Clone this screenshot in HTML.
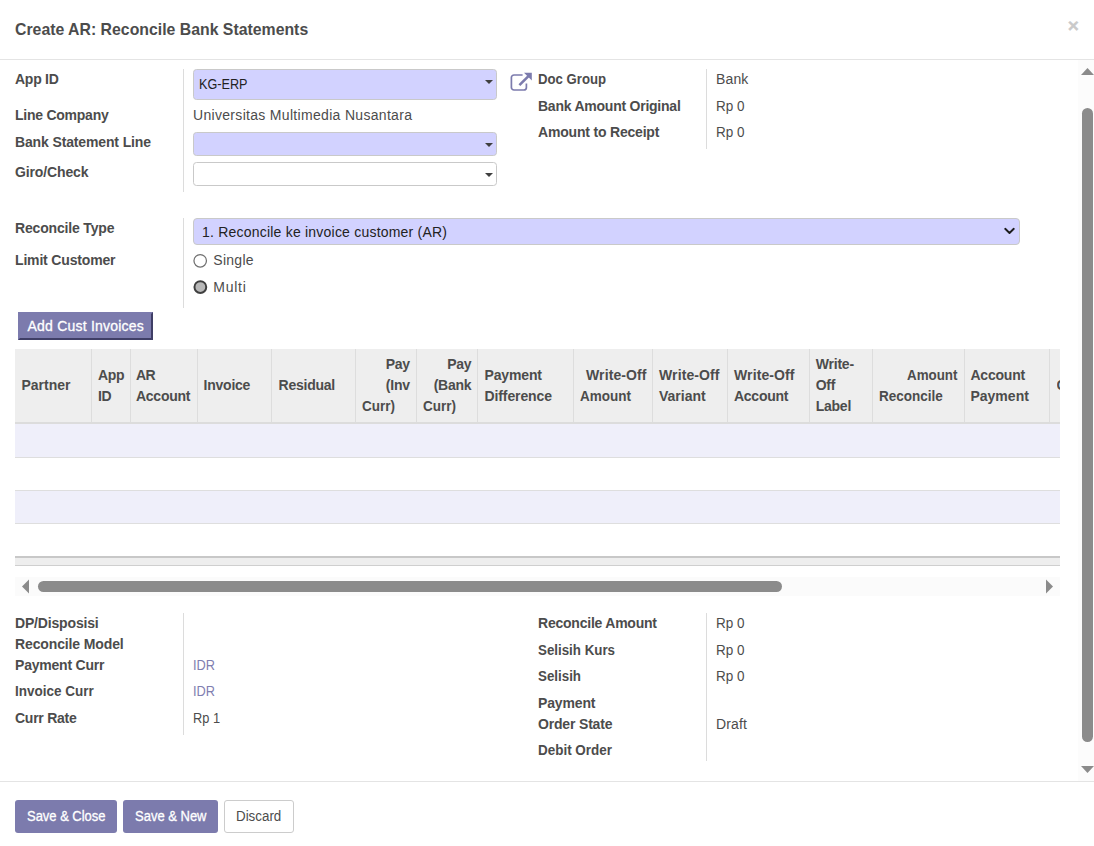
<!DOCTYPE html>
<html lang="en">
<head>
<meta charset="utf-8">
<title>Create AR: Reconcile Bank Statements</title>
<style>
html,body{margin:0;padding:0;background:#fff;}
body{width:1094px;height:846px;overflow:hidden;position:relative;font-family:"Liberation Sans",sans-serif;}
.t{position:absolute;white-space:nowrap;}
.a{position:absolute;}
.hline{position:absolute;left:0;width:1094px;height:1px;background:#e4e4e4;}
.vsep{position:absolute;width:1px;background:#dcdcdc;}
.inp{position:absolute;box-sizing:border-box;border:1px solid #c9c9c9;border-radius:3.5px;background:#d2d2ff;}
.caret{position:absolute;width:0;height:0;border-left:4px solid transparent;border-right:4px solid transparent;border-top:4px solid #3f3f3f;}
.th{position:absolute;top:349px;height:73px;background:#eeeeee;}
.colsep{position:absolute;top:349px;height:73px;width:1px;background:#dddddd;}
.row{position:absolute;left:15px;width:1045px;}
.btn{position:absolute;box-sizing:border-box;border-radius:3px;background:#7c7bad;}
</style>
</head>
<body>
<!-- header -->
<div class="hline" style="top:59px"></div>
<span class="t" style="left:1067.8px;top:14.3px;font-size:19px;line-height:23px;font-weight:700;color:#cacaca;-webkit-text-stroke:0.4px #cacaca;">×</span>

<!-- vertical scrollbar -->
<div class="a" style="left:1078px;top:60px;width:16px;height:721px;background:#fcfcfc;"></div>
<div class="a" style="left:1082px;top:108px;width:11px;height:634px;border-radius:5.5px;background:#8b8b8b;"></div>
<svg class="a" style="left:1078px;top:60px" width="16" height="721" viewBox="1078 60 16 721">
<polygon points="1081,75 1087.5,68 1094,75" fill="#8b8b8b"/>
<polygon points="1081,766 1087.5,773 1094,766" fill="#8b8b8b"/>
</svg>

<!-- group 1 -->
<div class="vsep" style="left:183px;top:69px;height:123px"></div>
<div class="vsep" style="left:706px;top:69px;height:80px"></div>
<div class="inp" style="left:193px;top:69px;width:304px;height:31px"></div>
<div class="caret" style="left:485px;top:80px"></div>
<div class="inp" style="left:193px;top:132px;width:304px;height:24px"></div>
<div class="caret" style="left:485px;top:143px"></div>
<div class="inp" style="left:193px;top:162px;width:304px;height:24px;background:#fff"></div>
<div class="caret" style="left:485px;top:173px"></div>
<svg class="a" style="left:506px;top:68px" width="30" height="28" viewBox="506 68 30 28">
<path d="M522.6 75H514a2.6 2.6 0 0 0-2.6 2.6V87.4a2.6 2.6 0 0 0 2.6 2.6h9.8a2.6 2.6 0 0 0 2.6-2.6V83.6" fill="none" stroke="#7c7bad" stroke-width="1.7"/>
<path d="M519.4 85.2L529 75.6" fill="none" stroke="#7c7bad" stroke-width="2.6"/>
<polygon points="524,72.8 531.8,72.8 531.8,80.6" fill="#7c7bad"/>
</svg>

<!-- group 2 -->
<div class="vsep" style="left:183px;top:218px;height:90px"></div>
<div class="inp" style="left:193px;top:218px;width:827px;height:27px;border-radius:4px"></div>
<svg class="a" style="left:1002px;top:225px" width="16" height="12" viewBox="1002 225 16 12">
<path d="M1005.2 228.8L1009.5 233L1013.8 228.8" fill="none" stroke="#1c1c1c" stroke-width="1.9" stroke-linecap="round" stroke-linejoin="round"/>
</svg>
<svg class="a" style="left:190px;top:250px" width="22" height="48" viewBox="190 250 22 48">
<circle cx="200.2" cy="260.8" r="6.25" fill="#fff" stroke="#707070" stroke-width="1.25"/>
<circle cx="200.35" cy="287.05" r="5.9" fill="#b8b8b8" stroke="#3f3f3f" stroke-width="2"/>
</svg>

<!-- add button -->
<div class="a" style="left:18px;top:312px;width:135px;height:28px;box-sizing:border-box;background:#7c7bad;border:2px solid;border-color:#7c7bad #3f3e66 #3f3e66 #7c7bad;"></div>

<!-- table -->
<div class="th" style="left:15px;width:1045px"></div>
<div class="colsep" style="left:91px"></div>
<div class="colsep" style="left:130px"></div>
<div class="colsep" style="left:197px"></div>
<div class="colsep" style="left:271px"></div>
<div class="colsep" style="left:355px"></div>
<div class="colsep" style="left:416px"></div>
<div class="colsep" style="left:477px"></div>
<div class="colsep" style="left:573px"></div>
<div class="colsep" style="left:652px"></div>
<div class="colsep" style="left:727px"></div>
<div class="colsep" style="left:809px"></div>
<div class="colsep" style="left:872px"></div>
<div class="colsep" style="left:964px"></div>
<div class="colsep" style="left:1049px"></div>
<div class="a" style="left:15px;top:422px;width:1045px;height:2px;background:#dcdcdc"></div>
<div class="row" style="top:424px;height:33px;background:#efeffa"></div>
<div class="row" style="top:457px;height:1px;background:#dedede"></div>
<div class="row" style="top:490px;height:1px;background:#dedede"></div>
<div class="row" style="top:491px;height:32px;background:#efeffa"></div>
<div class="row" style="top:523px;height:1px;background:#dedede"></div>
<div class="row" style="top:556px;height:2px;background:#c8c8c8"></div>
<div class="row" style="top:558px;height:7px;background:#eeeeee"></div>
<div class="row" style="top:565px;height:1px;background:#cfcfcf"></div>
<!-- partially visible column -->
<div class="a" style="left:1056.6px;top:377px;width:3.4px;height:17px;overflow:hidden"><span class="t" style="left:0;top:0;font-size:14px;line-height:16px;font-weight:700;color:#4c4c4c">Currency</span></div>

<!-- horizontal scrollbar -->
<div class="a" style="left:15px;top:577px;width:1045px;height:19px;background:#fbfbfb"></div>
<div class="a" style="left:38px;top:581px;width:744px;height:11px;border-radius:5.5px;background:#8b8b8b"></div>
<svg class="a" style="left:15px;top:577px" width="1045" height="19" viewBox="15 577 1045 19">
<polygon points="29,579.5 22,586.5 29,593.5" fill="#8b8b8b"/>
<polygon points="1046,579.5 1053,586.5 1046,593.5" fill="#8b8b8b"/>
</svg>

<!-- group 3 -->
<div class="vsep" style="left:183px;top:613px;height:122px"></div>
<div class="vsep" style="left:706px;top:613px;height:148px"></div>

<!-- footer -->
<div class="hline" style="top:781px"></div>
<div class="btn" style="left:15px;top:800px;width:102px;height:33px"></div>
<div class="btn" style="left:123px;top:800px;width:95px;height:33px"></div>
<div class="btn" style="left:224px;top:800px;width:70px;height:33px;background:#fff;border:1px solid #cccccc"></div>

<span class="t" style="left:15.10px;top:20.30px;font-size:17px;line-height:19px;letter-spacing:0.000px;color:#4c4c4c;font-weight:700;transform:scaleX(0.9310);transform-origin:0 0;">Create AR: Reconcile Bank Statements</span>
<span class="t" style="left:15.00px;top:71.00px;font-size:14px;line-height:16px;letter-spacing:-0.253px;color:#4c4c4c;font-weight:700;">App ID</span>
<span class="t" style="left:15.00px;top:107.00px;font-size:14px;line-height:16px;letter-spacing:-0.246px;color:#4c4c4c;font-weight:700;">Line Company</span>
<span class="t" style="left:15.00px;top:134.00px;font-size:14px;line-height:16px;letter-spacing:-0.138px;color:#4c4c4c;font-weight:700;">Bank Statement Line</span>
<span class="t" style="left:15.00px;top:164.00px;font-size:14px;line-height:16px;letter-spacing:-0.134px;color:#4c4c4c;font-weight:700;">Giro/Check</span>
<span class="t" style="left:199.00px;top:76.00px;font-size:14px;line-height:16px;letter-spacing:0.000px;color:#222;transform:scaleX(0.9034);transform-origin:0 0;">KG-ERP</span>
<span class="t" style="left:193.00px;top:107.00px;font-size:14px;line-height:16px;letter-spacing:0.312px;color:#4c4c4c;">Universitas Multimedia Nusantara</span>
<span class="t" style="left:538.00px;top:71.00px;font-size:14px;line-height:16px;letter-spacing:0.000px;color:#4c4c4c;font-weight:700;transform:scaleX(0.9400);transform-origin:0 0;">Doc Group</span>
<span class="t" style="left:538.00px;top:98.00px;font-size:14px;line-height:16px;letter-spacing:-0.236px;color:#4c4c4c;font-weight:700;">Bank Amount Original</span>
<span class="t" style="left:538.00px;top:124.00px;font-size:14px;line-height:16px;letter-spacing:-0.191px;color:#4c4c4c;font-weight:700;">Amount to Receipt</span>
<span class="t" style="left:716.00px;top:71.00px;font-size:14px;line-height:16px;letter-spacing:0.126px;color:#4c4c4c;">Bank</span>
<span class="t" style="left:716.00px;top:98.00px;font-size:14px;line-height:16px;letter-spacing:0.000px;color:#4c4c4c;transform:scaleX(0.9635);transform-origin:0 0;">Rp 0</span>
<span class="t" style="left:716.00px;top:124.00px;font-size:14px;line-height:16px;letter-spacing:0.000px;color:#4c4c4c;transform:scaleX(0.9635);transform-origin:0 0;">Rp 0</span>
<span class="t" style="left:15.00px;top:219.50px;font-size:14px;line-height:16px;letter-spacing:-0.167px;color:#4c4c4c;font-weight:700;">Reconcile Type</span>
<span class="t" style="left:15.00px;top:252.00px;font-size:14px;line-height:16px;letter-spacing:-0.168px;color:#4c4c4c;font-weight:700;">Limit Customer</span>
<span class="t" style="left:202.00px;top:223.50px;font-size:14px;line-height:16px;letter-spacing:0.214px;color:#222;">1. Reconcile ke invoice customer (AR)</span>
<span class="t" style="left:213.30px;top:252.00px;font-size:14px;line-height:16px;letter-spacing:0.276px;color:#4c4c4c;">Single</span>
<span class="t" style="left:213.30px;top:278.70px;font-size:14px;line-height:16px;letter-spacing:0.734px;color:#4c4c4c;">Multi</span>
<span class="t" style="left:27.50px;top:318.00px;font-size:14px;line-height:16px;letter-spacing:0.213px;color:#fff;-webkit-text-stroke:0.3px #fff;">Add Cust Invoices</span>
<span class="t" style="left:15.00px;top:614.50px;font-size:14px;line-height:16px;letter-spacing:-0.168px;color:#4c4c4c;font-weight:700;">DP/Disposisi</span>
<span class="t" style="left:15.00px;top:635.50px;font-size:14px;line-height:16px;letter-spacing:-0.123px;color:#4c4c4c;font-weight:700;">Reconcile Model</span>
<span class="t" style="left:15.00px;top:656.50px;font-size:14px;line-height:16px;letter-spacing:-0.210px;color:#4c4c4c;font-weight:700;">Payment Curr</span>
<span class="t" style="left:15.00px;top:682.75px;font-size:14px;line-height:16px;letter-spacing:0.000px;color:#4c4c4c;font-weight:700;transform:scaleX(0.9639);transform-origin:0 0;">Invoice Curr</span>
<span class="t" style="left:15.00px;top:709.50px;font-size:14px;line-height:16px;letter-spacing:-0.256px;color:#4c4c4c;font-weight:700;">Curr Rate</span>
<span class="t" style="left:193.00px;top:656.50px;font-size:14px;line-height:16px;letter-spacing:0.000px;color:#7f7eb0;transform:scaleX(0.9119);transform-origin:0 0;">IDR</span>
<span class="t" style="left:193.00px;top:682.75px;font-size:14px;line-height:16px;letter-spacing:0.000px;color:#7f7eb0;transform:scaleX(0.9119);transform-origin:0 0;">IDR</span>
<span class="t" style="left:193.00px;top:709.50px;font-size:14px;line-height:16px;letter-spacing:0.000px;color:#4c4c4c;transform:scaleX(0.9128);transform-origin:0 0;">Rp 1</span>
<span class="t" style="left:538.00px;top:614.50px;font-size:14px;line-height:16px;letter-spacing:-0.226px;color:#4c4c4c;font-weight:700;">Reconcile Amount</span>
<span class="t" style="left:538.00px;top:642.00px;font-size:14px;line-height:16px;letter-spacing:0.000px;color:#4c4c4c;font-weight:700;transform:scaleX(0.9515);transform-origin:0 0;">Selisih Kurs</span>
<span class="t" style="left:538.00px;top:667.50px;font-size:14px;line-height:16px;letter-spacing:0.000px;color:#4c4c4c;font-weight:700;transform:scaleX(0.9526);transform-origin:0 0;">Selisih</span>
<span class="t" style="left:538.00px;top:694.60px;font-size:14px;line-height:16px;letter-spacing:-0.143px;color:#4c4c4c;font-weight:700;">Payment</span>
<span class="t" style="left:538.00px;top:716.00px;font-size:14px;line-height:16px;letter-spacing:-0.175px;color:#4c4c4c;font-weight:700;">Order State</span>
<span class="t" style="left:538.00px;top:742.00px;font-size:14px;line-height:16px;letter-spacing:0.000px;color:#4c4c4c;font-weight:700;transform:scaleX(0.9608);transform-origin:0 0;">Debit Order</span>
<span class="t" style="left:716.00px;top:614.50px;font-size:14px;line-height:16px;letter-spacing:0.000px;color:#4c4c4c;transform:scaleX(0.9635);transform-origin:0 0;">Rp 0</span>
<span class="t" style="left:716.00px;top:642.00px;font-size:14px;line-height:16px;letter-spacing:0.000px;color:#4c4c4c;transform:scaleX(0.9635);transform-origin:0 0;">Rp 0</span>
<span class="t" style="left:716.00px;top:667.50px;font-size:14px;line-height:16px;letter-spacing:0.000px;color:#4c4c4c;transform:scaleX(0.9635);transform-origin:0 0;">Rp 0</span>
<span class="t" style="left:716.00px;top:716.00px;font-size:14px;line-height:16px;letter-spacing:0.164px;color:#4c4c4c;">Draft</span>
<span class="t" style="left:26.50px;top:808.20px;font-size:14px;line-height:16px;letter-spacing:0.000px;color:#fff;-webkit-text-stroke:0.3px #fff;transform:scaleX(0.9254);transform-origin:0 0;">Save &amp; Close</span>
<span class="t" style="left:134.80px;top:808.20px;font-size:14px;line-height:16px;letter-spacing:0.000px;color:#fff;-webkit-text-stroke:0.3px #fff;transform:scaleX(0.9280);transform-origin:0 0;">Save &amp; New</span>
<span class="t" style="left:236.20px;top:808.20px;font-size:14px;line-height:16px;letter-spacing:0.000px;color:#4c4c4c;transform:scaleX(0.9543);transform-origin:0 0;">Discard</span>
<span class="t" style="left:21.50px;top:377.00px;font-size:14px;line-height:16px;letter-spacing:-0.005px;color:#4c4c4c;font-weight:700;">Partner</span>
<span class="t" style="left:98.00px;top:367.00px;font-size:14px;line-height:16px;letter-spacing:-0.381px;color:#4c4c4c;font-weight:700;">App</span>
<span class="t" style="left:98.00px;top:387.75px;font-size:14px;line-height:16px;letter-spacing:-0.392px;color:#4c4c4c;font-weight:700;">ID</span>
<span class="t" style="left:136.00px;top:367.00px;font-size:14px;line-height:16px;letter-spacing:-0.567px;color:#4c4c4c;font-weight:700;">AR</span>
<span class="t" style="left:136.00px;top:387.75px;font-size:14px;line-height:16px;letter-spacing:-0.261px;color:#4c4c4c;font-weight:700;">Account</span>
<span class="t" style="left:203.50px;top:377.00px;font-size:14px;line-height:16px;letter-spacing:-0.225px;color:#4c4c4c;font-weight:700;">Invoice</span>
<span class="t" style="left:278.50px;top:377.00px;font-size:14px;line-height:16px;letter-spacing:-0.233px;color:#4c4c4c;font-weight:700;">Residual</span>
<span class="t" style="left:385.78px;top:355.60px;font-size:14px;line-height:16px;letter-spacing:-0.349px;color:#4c4c4c;font-weight:700;">Pay</span>
<span class="t" style="left:385.81px;top:377.00px;font-size:14px;line-height:16px;letter-spacing:-0.232px;color:#4c4c4c;font-weight:700;">(Inv</span>
<span class="t" style="left:362.00px;top:397.75px;font-size:14px;line-height:16px;letter-spacing:0.000px;color:#4c4c4c;font-weight:700;transform:scaleX(0.9639);transform-origin:0 0;">Curr)</span>
<span class="t" style="left:447.28px;top:355.60px;font-size:14px;line-height:16px;letter-spacing:-0.349px;color:#4c4c4c;font-weight:700;">Pay</span>
<span class="t" style="left:433.68px;top:377.00px;font-size:14px;line-height:16px;letter-spacing:-0.272px;color:#4c4c4c;font-weight:700;">(Bank</span>
<span class="t" style="left:423.00px;top:397.75px;font-size:14px;line-height:16px;letter-spacing:0.000px;color:#4c4c4c;font-weight:700;transform:scaleX(0.9639);transform-origin:0 0;">Curr)</span>
<span class="t" style="left:484.50px;top:367.00px;font-size:14px;line-height:16px;letter-spacing:-0.143px;color:#4c4c4c;font-weight:700;">Payment</span>
<span class="t" style="left:484.50px;top:387.75px;font-size:14px;line-height:16px;letter-spacing:-0.108px;color:#4c4c4c;font-weight:700;">Difference</span>
<span class="t" style="left:586.00px;top:367.00px;font-size:14px;line-height:16px;letter-spacing:0.109px;color:#4c4c4c;font-weight:700;">Write-Off</span>
<span class="t" style="left:580.00px;top:387.75px;font-size:14px;line-height:16px;letter-spacing:0.000px;color:#4c4c4c;font-weight:700;transform:scaleX(0.9643);transform-origin:0 0;">Amount</span>
<span class="t" style="left:659.00px;top:367.00px;font-size:14px;line-height:16px;letter-spacing:0.109px;color:#4c4c4c;font-weight:700;">Write-Off</span>
<span class="t" style="left:659.00px;top:387.75px;font-size:14px;line-height:16px;letter-spacing:0.008px;color:#4c4c4c;font-weight:700;">Variant</span>
<span class="t" style="left:734.00px;top:367.00px;font-size:14px;line-height:16px;letter-spacing:0.109px;color:#4c4c4c;font-weight:700;">Write-Off</span>
<span class="t" style="left:734.00px;top:387.75px;font-size:14px;line-height:16px;letter-spacing:-0.261px;color:#4c4c4c;font-weight:700;">Account</span>
<span class="t" style="left:815.75px;top:355.60px;font-size:14px;line-height:16px;letter-spacing:-0.221px;color:#4c4c4c;font-weight:700;">Write-</span>
<span class="t" style="left:815.75px;top:377.00px;font-size:14px;line-height:16px;letter-spacing:-0.283px;color:#4c4c4c;font-weight:700;">Off</span>
<span class="t" style="left:815.75px;top:397.75px;font-size:14px;line-height:16px;letter-spacing:-0.256px;color:#4c4c4c;font-weight:700;">Label</span>
<span class="t" style="left:907.00px;top:367.00px;font-size:14px;line-height:16px;letter-spacing:0.000px;color:#4c4c4c;font-weight:700;transform:scaleX(0.9548);transform-origin:0 0;">Amount</span>
<span class="t" style="left:878.75px;top:387.75px;font-size:14px;line-height:16px;letter-spacing:0.000px;color:#4c4c4c;font-weight:700;transform:scaleX(0.9639);transform-origin:0 0;">Reconcile</span>
<span class="t" style="left:970.40px;top:367.00px;font-size:14px;line-height:16px;letter-spacing:-0.200px;color:#4c4c4c;font-weight:700;">Account</span>
<span class="t" style="left:970.40px;top:387.75px;font-size:14px;line-height:16px;letter-spacing:0.023px;color:#4c4c4c;font-weight:700;">Payment</span>
</body>
</html>
